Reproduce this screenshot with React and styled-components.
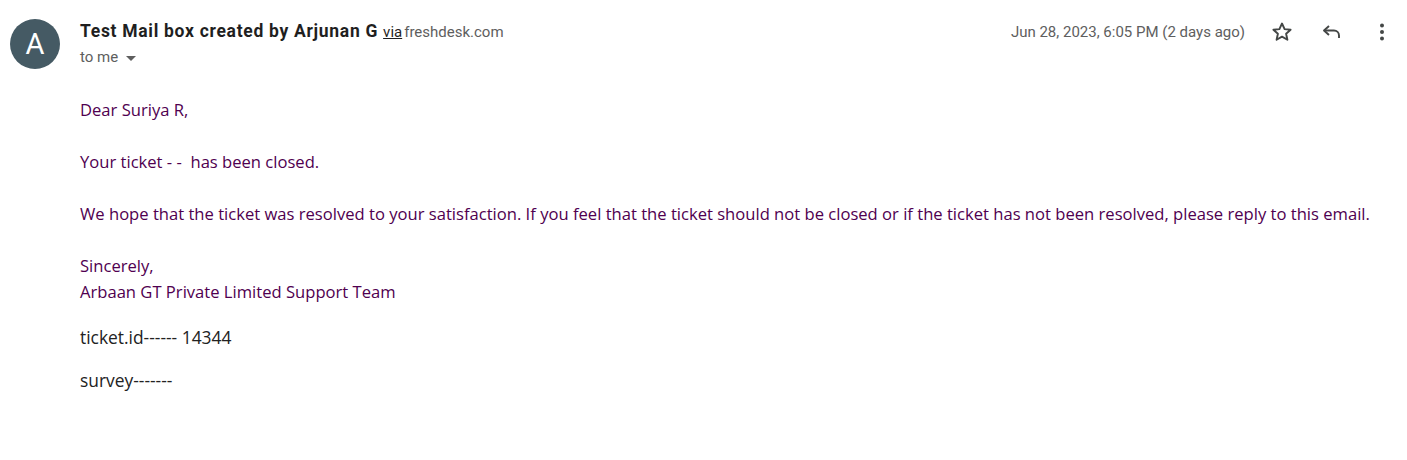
import React from 'react';
import styled, { createGlobalStyle } from 'styled-components';

const Global = createGlobalStyle`
    body {
        margin: 0;
        background: #fff;
        font-family: Roboto, "Liberation Sans", Arial, sans-serif;
    }
`;

const Mail = styled.div`
    display: flex;
    padding: 19px 0 0 10px;
    gap: 20px;
`;

const Avatar = styled.div`
    width: 50px;
    height: 50px;
    flex: none;
    border-radius: 50%;
    background: #455a64;
    color: #fff;
    font-size: 29px;
    display: flex;
    align-items: center;
    justify-content: center;
`;

const Main = styled.div`
    flex: 1;
`;

const Header = styled.div`
    display: flex;
    justify-content: space-between;
    align-items: flex-start;
`;

const Sender = styled.div`
    font-size: 15px;
    line-height: 24px;
    color: #5e5e5e;
`;

const Name = styled.span`
    font-size: 17.5px;
    font-weight: bold;
    letter-spacing: 0.7px;
    color: #1f1f1f;
`;

const Via = styled.span`
    text-decoration: underline;
    color: #1f1f1f;
    margin: 0 2px 0 5px;
`;

const ToMe = styled.div`
    font-size: 15px;
    line-height: 24px;
    margin-top: 1px;
    color: #5e5e5e;
    display: flex;
    align-items: center;
    gap: 8px;
`;

const Caret = styled.span`
    width: 0;
    height: 0;
    margin-top: 2px;
    border-left: 5px solid transparent;
    border-right: 5px solid transparent;
    border-top: 5px solid #5e5e5e;
`;

const Tools = styled.div`
    display: flex;
    align-items: center;
    height: 26px;
`;

const Date = styled.span`
    font-size: 15px;
    color: #5e5e5e;
    margin-right: 12px;
`;

const IconButton = styled.span`
    width: 50px;
    height: 26px;
    display: flex;
    align-items: center;
    justify-content: center;
    color: #444746;
`;

const Body = styled.div`
    margin-top: 28px;
    font-family: "Open Sans", "Noto Sans", sans-serif;
    font-size: 16.6px;
    line-height: 26px;
    color: #500050;
`;

const Para = styled.p`
    margin: 0 0 ${p => p.gap || 26}px;
`;

const Plain = styled.p`
    margin: 0 0 ${p => p.gap || 16}px;
    font-size: 17.4px;
    color: #222;
`;

const Star = () => (
    <svg width="24" height="24" viewBox="0 0 24 24" fill="none" stroke="currentColor" strokeWidth="1.9" strokeLinejoin="round">
        <path d="M12 3.5l2.6 5.6 6 .6-4.5 4 1.3 6L12 16.6l-5.4 3.1 1.3-6-4.5-4 6-.6z" />
    </svg>
);

const Reply = () => (
    <svg width="24" height="24" viewBox="0 0 24 24" fill="none" stroke="currentColor" strokeWidth="1.9" strokeLinejoin="round">
        <path d="M9 6l-5 4.5L9 15" />
        <path d="M4.5 10.5H14a5 5 0 0 1 5 5V18" />
    </svg>
);

const More = () => (
    <svg width="24" height="24" viewBox="0 0 24 24" fill="currentColor">
        <circle cx="12" cy="5.5" r="2" />
        <circle cx="12" cy="12" r="2" />
        <circle cx="12" cy="18.5" r="2" />
    </svg>
);

export default function App() {
    return (
        <Mail>
            <Global />
            <Avatar>A</Avatar>
            <Main>
                <Header>
                    <div>
                        <Sender>
                            <Name>Test Mail box created by Arjunan G</Name>
                            <Via>via</Via>freshdesk.com
                        </Sender>
                        <ToMe>to me <Caret /></ToMe>
                    </div>
                    <Tools>
                        <Date>Jun 28, 2023, 6:05 PM (2 days ago)</Date>
                        <IconButton><Star /></IconButton>
                        <IconButton><Reply /></IconButton>
                        <IconButton><More /></IconButton>
                    </Tools>
                </Header>
                <Body>
                    <Para>Dear Suriya R,</Para>
                    <Para>Your ticket - -&nbsp; has been closed.</Para>
                    <Para>We hope that the ticket was resolved to your satisfaction. If you feel that the ticket should not be closed or if the ticket has not been resolved, please reply to this email.</Para>
                    <Para gap={19}>Sincerely,<br />Arbaan GT Private Limited Support Team</Para>
                    <Plain gap={17}>ticket.id------ 14344</Plain>
                    <Plain>survey-------</Plain>
                </Body>
            </Main>
        </Mail>
    );
}
